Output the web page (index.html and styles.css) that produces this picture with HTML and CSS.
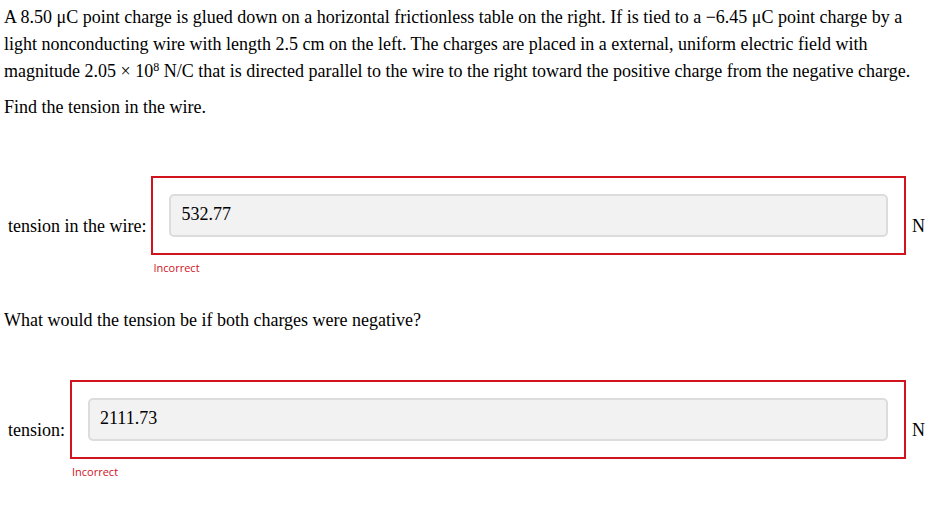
FILE: index.html
```html
<!DOCTYPE html>
<html>
<head>
<meta charset="utf-8">
<link rel="stylesheet" href="styles.css">
</head>
<body>
<div class="page">
  <p class="text">A 8.50 μC point charge is glued down on a horizontal frictionless table on the right. If is tied to a −6.45 μC point charge by a light nonconducting wire with length 2.5 cm on the left. The charges are placed in a external, uniform electric field with magnitude 2.05 × 10<sup>8</sup> N/C that is directed parallel to the wire to the right toward the positive charge from the negative charge.</p>
  <p class="text">Find the tension in the wire.</p>

  <div class="answer-row row-one">
    <span class="label">tension in the wire:</span>
    <div class="answer-group">
      <div class="answer-box">
        <div class="answer-input">532.77</div>
      </div>
      <div class="feedback">Incorrect</div>
    </div>
    <span class="unit">N</span>
  </div>

  <p class="text question">What would the tension be if both charges were negative?</p>

  <div class="answer-row row-two">
    <span class="label">tension:</span>
    <div class="answer-group">
      <div class="answer-box">
        <div class="answer-input">2111.73</div>
      </div>
      <div class="feedback">Incorrect</div>
    </div>
    <span class="unit">N</span>
  </div>
</div>
</body>
</html>
```
FILE: styles.css
```css
html, body {
  margin: 0;
  padding: 0;
  background: #fff;
}
.page {
  padding: 4px 4px 0 4px;
  font-family: "Liberation Serif", "Times New Roman", serif;
  font-size: 18px;
  color: #000;
}
.text {
  margin: 0 0 9px 0;
  line-height: 27px;
}
.text sup {
  font-size: 12px;
  line-height: 0;
  vertical-align: 6px;
}
.answer-row {
  display: flex;
  align-items: center;
}
.row-one {
  margin-top: 55px;
}
.question {
  margin-top: 31px;
}
.row-two {
  margin-top: 46px;
}
.label {
  padding-left: 4px;
  margin-right: 5px;
  white-space: nowrap;
}
.answer-group {
  flex: 1;
  display: flex;
  flex-direction: column;
}
.answer-box {
  border: 2px solid #d0131d;
  padding: 16px;
}
.answer-input {
  box-sizing: border-box;
  height: 43px;
  border: 2px solid #dcdcdc;
  border-radius: 5px;
  background: #f2f2f2;
  padding: 8px 10px 0 10px;
  font-size: 18px;
}
.feedback {
  font-family: "Open Sans", "Liberation Sans", sans-serif;
  font-size: 11px;
  color: #d0131d;
  margin-top: 5px;
  padding-left: 2px;
  line-height: 16px;
}
.unit {
  margin-left: 6px;
  margin-right: 3px;
}
```
